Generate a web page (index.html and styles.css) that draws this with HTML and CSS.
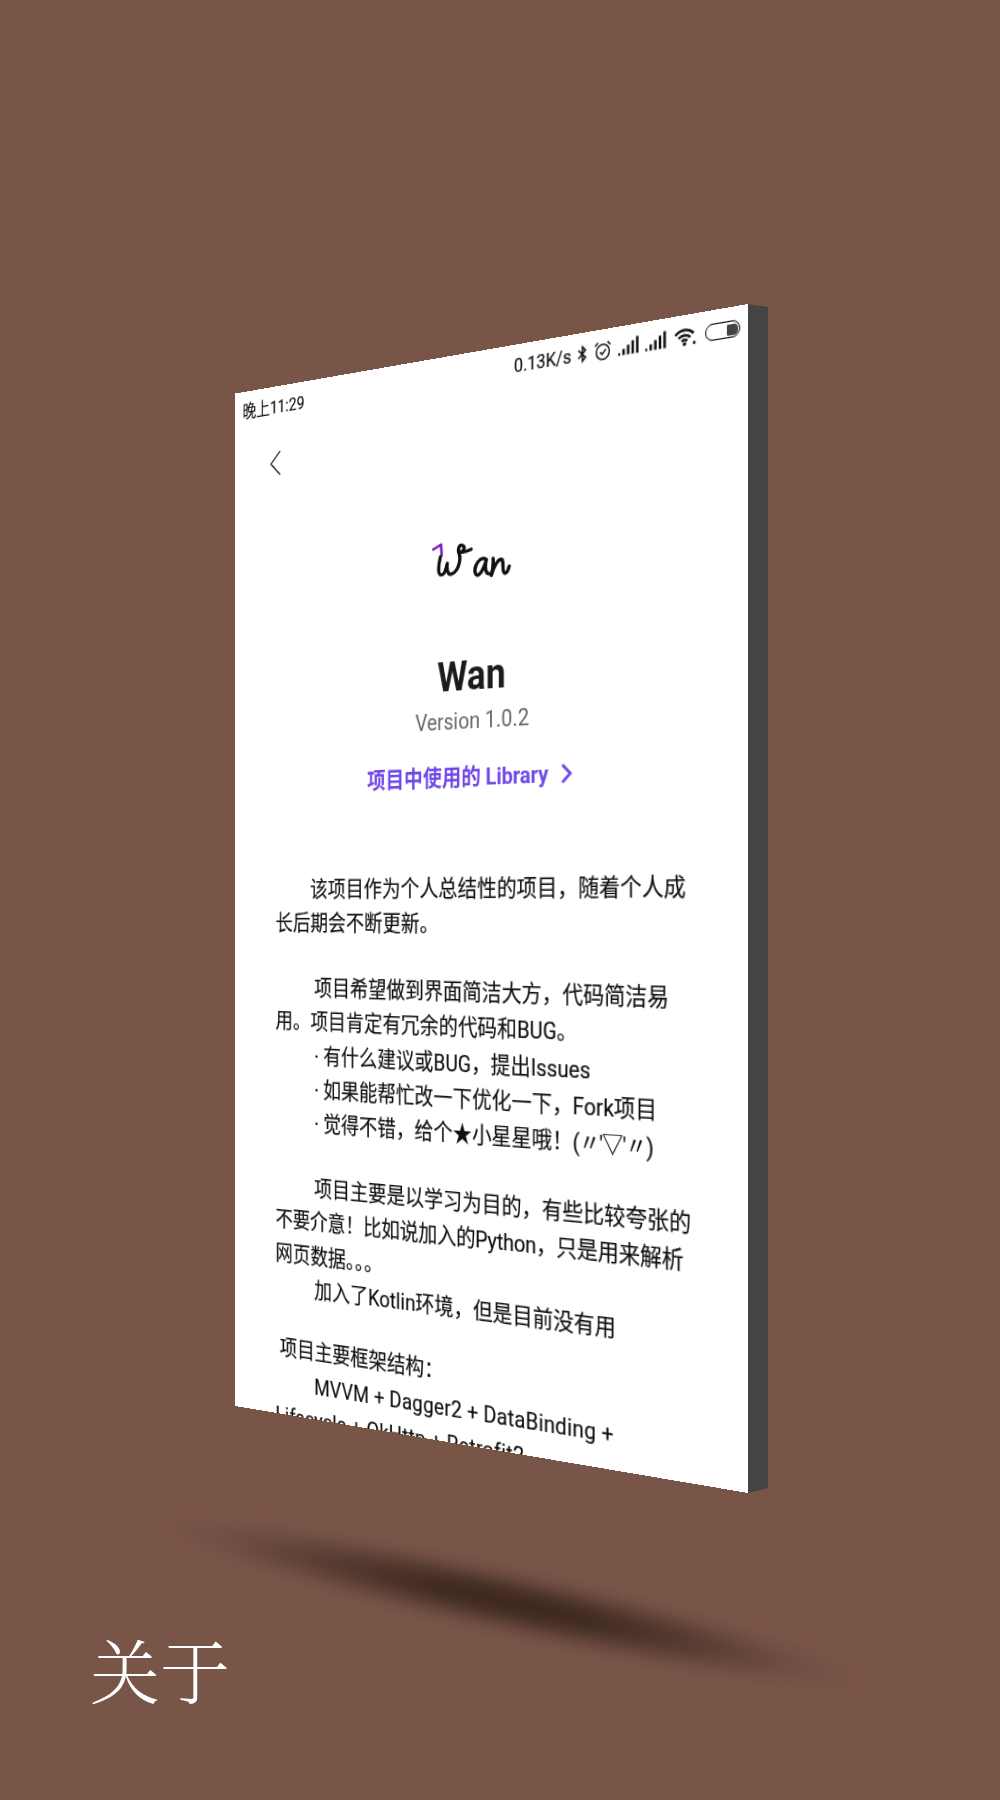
FILE: index.html
```html
<!DOCTYPE html>
<html lang="zh-CN">

<head>
    <meta charset="UTF-8" />
    <meta name="viewport" content="width=device-width, initial-scale=1.0" />
    <title>关于</title>
    <link rel="stylesheet" href="styles.css">
</head>

<body>
    <div class="stage">
        <div class="shadow"></div>
        <div class="side"></div>

        <div class="screen">
            <div class="status">
                <span class="time">晚上11:29</span>
                <div class="status-right">
                    <span class="speed">0.13K/s</span>
                    <svg class="ic-bt" viewBox="0 0 10 16"><path d="M1 4.5 8 11 5 14V2L8 5 1 11.5" /></svg>
                    <svg class="ic-alarm" viewBox="0 0 18 18"><circle cx="9" cy="10" r="6.4" /><path d="M6.3 10 8.3 12 12 8M1.5 4.6 4.4 1.8M16.5 4.6 13.6 1.8" /></svg>
                    <svg class="ic-signal" viewBox="0 0 20 15"><rect x="0" y="12" width="2" height="2" /><rect x="4" y="9" width="2.4" height="5" /><rect x="8.4" y="6" width="2.4" height="8" /><rect x="12.8" y="3" width="2.4" height="11" /><rect x="17.2" y="0" width="2.4" height="14" /></svg>
                    <svg class="ic-signal" viewBox="0 0 20 15"><rect x="0" y="12" width="2" height="2" /><rect x="4" y="9" width="2.4" height="5" /><rect x="8.4" y="6" width="2.4" height="8" /><rect x="12.8" y="3" width="2.4" height="11" /><rect x="17.2" y="0" width="2.4" height="14" /></svg>
                    <svg class="ic-wifi" viewBox="0 0 20 15"><path d="M1 5.5C5.5 1 12.5 1 17 5.5M3.8 8.2C6.8 5.4 11.2 5.4 14.2 8.2M6.6 10.8C8 9.6 10 9.6 11.4 10.8" /><circle class="fill" cx="9" cy="13" r="1.6" /><circle class="fill" cx="17.5" cy="13" r="1.3" /></svg>
                    <div class="battery"><div class="battery-level"></div></div>
                </div>
            </div>

            <div class="toolbar">
                <svg class="back" viewBox="0 0 14 24"><path d="M12.5 1 1.5 12 12.5 23" /></svg>
            </div>

            <svg class="logo" viewBox="40 28 240 122" preserveAspectRatio="none">
                <path class="logo-tick" d="M44 46 68 34 70 66" />
                <path d="M66 70C60 95 56 125 70 125 80 125 84 105 87 92 85 110 88 128 100 126 118 122 130 92 124 68 118 52 124 38 134 44 146 52 134 66 122 62 135 66 150 62 160 58" />
                <path d="M204 92C188 80 168 108 172 128 176 146 192 138 206 94 200 118 204 138 216 136M226 92C228 110 224 128 221 142 228 118 240 94 252 98 260 106 250 136 262 140 268 140 272 128 274 120" />
            </svg>

            <h1 class="app-name">Wan</h1>
            <p class="version">Version 1.0.2</p>
            <div class="library">
                <span>项目中使用的 Library</span>
                <svg class="chevron" viewBox="0 0 12 18"><path d="M2 1.5 10 9 2 16.5" /></svg>
            </div>

            <div class="about">
                <div class="para">
                    <div class="line first">该项目作为个人总结性的项目，随着个人成</div>
                    <div class="line">长后期会不断更新。</div>
                </div>
                <div class="para">
                    <div class="line indent">项目希望做到界面简洁大方，代码简洁易</div>
                    <div class="line">用。项目肯定有冗余的代码和BUG。</div>
                    <div class="line indent"><span class="dot">·</span>有什么建议或BUG，提出Issues</div>
                    <div class="line indent"><span class="dot">·</span>如果能帮忙改一下优化一下，Fork项目</div>
                    <div class="line indent"><span class="dot">·</span>觉得不错，给个★小星星哦！<span class="kaomoji">(〃'▽'〃)</span></div>
                </div>
                <div class="para">
                    <div class="line indent">项目主要是以学习为目的，有些比较夸张的</div>
                    <div class="line tight">不要介意！比如说加入的Python，只是用来解析</div>
                    <div class="line">网页数据。。。</div>
                    <div class="line indent">加入了Kotlin环境，但是目前没有用</div>
                </div>
                <div class="para">
                    <div class="line head">项目主要框架结构：</div>
                    <div class="line indent wide">MVVM + Dagger2 + DataBinding +</div>
                    <div class="line wide">Lifecycle + OkHttp + Retrofit2</div>
                </div>
            </div>
        </div>

        <div class="caption">关于</div>
    </div>
</body>

</html>
```

FILE: styles.css
```css
body {
    margin: 0;
    background-color: #795548;
    font-family: Roboto, "Noto Sans CJK SC", sans-serif;
}

.stage {
    position: relative;
    width: 1000px;
    height: 1800px;
    overflow: hidden;
}

/* floor shadow */
.shadow {
    position: absolute;
    left: 150px;
    top: 1568px;
    width: 724px;
    height: 70px;
    background: radial-gradient(closest-side, #3e2921 0%, #3e2921 22%, rgba(62, 41, 33, 0.62) 50%, rgba(62, 41, 33, 0.18) 78%, rgba(62, 41, 33, 0) 100%);
    transform: rotate(12.6deg);
    filter: blur(6px);
}

/* phone edge */
.side {
    position: absolute;
    left: 748px;
    top: 304px;
    width: 20px;
    height: 1189px;
    background-color: #444;
    clip-path: polygon(0 0, 100% 3px, 100% 1184px, 0 100%);
}

/* the flat 540x960 page, mapped on to the tilted quad */
.screen {
    position: absolute;
    left: 0;
    top: 0;
    width: 540px;
    height: 960px;
    overflow: hidden;
    display: flex;
    flex-direction: column;
    align-items: center;
    background-color: #fff;
    color: #111;
    -webkit-text-stroke: 0.15px #111;
    transform-origin: 0 0;
    transform: matrix3d(0.74363, -0.24931, 0, -0.00027491,
            0, 1.05469, 0, 0,
            0, 0, 1, 0,
            235.4, 393.5, 0, 1);
}

.status {
    flex: none;
    width: 100%;
    height: 36px;
    box-sizing: border-box;
    padding: 0 7px 0 9px;
    display: flex;
    align-items: center;
    justify-content: space-between;
    font-size: 16.6px;
}

.status-right {
    display: flex;
    align-items: center;
}

.status-right svg {
    fill: none;
    stroke: #111;
}

.ic-bt {
    width: 10px;
    height: 16px;
    margin-left: 6px;
    stroke-width: 1.5;
}

.ic-alarm {
    width: 18px;
    height: 18px;
    margin-left: 6px;
    stroke-width: 1.4;
}

.status-right .ic-signal {
    width: 20px;
    height: 16px;
    margin-left: 6px;
    fill: #111;
    stroke: none;
}

.ic-wifi {
    width: 22px;
    height: 16px;
    margin-left: 7px;
    stroke-width: 2.1;
}

.status-right .fill {
    fill: #111;
    stroke: none;
}

.battery {
    width: 32px;
    height: 14px;
    margin-left: 7px;
    box-sizing: border-box;
    border: 1.6px solid #111;
    border-radius: 7px;
    display: flex;
    justify-content: flex-end;
    padding: 1.5px;
}

.battery-level {
    width: 10px;
    background-color: #444;
    border-radius: 1px 4px 4px 1px;
}

.toolbar {
    flex: none;
    width: 100%;
    height: 72px;
    display: flex;
    align-items: center;
}

.back {
    width: 14px;
    height: 24px;
    margin-left: 42px;
    fill: none;
    stroke: #222;
    stroke-width: 1.4;
}

.logo {
    flex: none;
    width: 84px;
    height: 36px;
    margin-top: 56px;
    fill: none;
    stroke: #111;
    stroke-width: 10;
    stroke-linecap: round;
    stroke-linejoin: round;
}

.logo .logo-tick {
    stroke: #7b1fc0;
    stroke-width: 8;
}

.app-name {
    margin: 64px 0 0;
    font-size: 37px;
    line-height: 40px;
    font-weight: 700;
    color: #1c1c1c;
    -webkit-text-stroke: 0;
}

.version {
    margin: 5px 0 0;
    font-size: 20.7px;
    line-height: 28px;
    color: #666;
    -webkit-text-stroke: 0;
}

.library {
    display: flex;
    align-items: center;
    margin-top: 22px;
    padding-right: 10px;
    font-size: 20.7px;
    line-height: 28px;
    font-weight: 700;
    color: #7048e8;
    -webkit-text-stroke: 0;
}

.chevron {
    width: 12px;
    height: 18px;
    margin-left: 12px;
    fill: none;
    stroke: #7048e8;
    stroke-width: 2.6;
}

.about {
    align-self: flex-start;
    margin-top: 69px;
    padding-left: 49px;
    font-size: 20.7px;
    line-height: 31.4px;
}

.para {
    margin-bottom: 28px;
}

.para:nth-child(3) {
    margin-bottom: 26px;
}

.line {
    white-space: nowrap;
}

.first {
    padding-left: 41px;
}

.indent {
    padding-left: 46px;
}

.head {
    padding-left: 5px;
}

.dot {
    margin-right: 5px;
}

.kaomoji {
    letter-spacing: -0.8px;
}

.tight {
    letter-spacing: -0.2px;
}

.wide {
    letter-spacing: 0.23px;
}

.caption {
    position: absolute;
    left: 90px;
    top: 1624px;
    font-family: "Noto Serif CJK SC", "Noto Sans CJK SC", serif;
    font-size: 70px;
    line-height: 90px;
    font-weight: 300;
    color: #fff;
}
```
